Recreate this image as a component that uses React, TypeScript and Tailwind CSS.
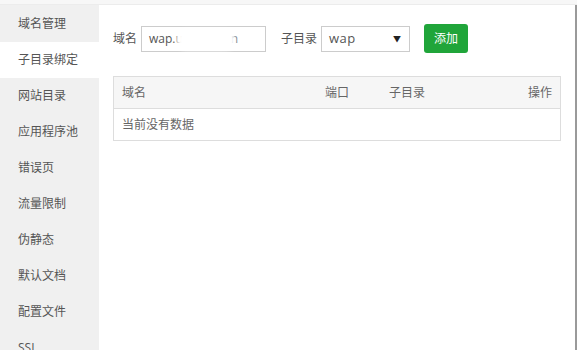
const menu = ['域名管理', '子目录绑定', '网站目录', '应用程序池', '错误页', '流量限制', '伪静态', '默认文档', '配置文件', 'SSL'];

export default function App() {
  return (
    <div
      className="h-[350px] w-[577px] overflow-hidden bg-white text-[12px] text-[#555]"
      style={{ fontFamily: '"Open Sans", "Noto Sans CJK SC", sans-serif' }}
    >
      <div className="h-[5px] border-b border-[#ececec] bg-[#f7f7f7]" />
      <div className="flex h-[345px] border-r-2 border-[#9a9a9a]">
        <div className="w-[99px] shrink-0 bg-[#f0f0f0] pt-px">
          {menu.map((m, i) => (
            <div
              key={m}
              className={`flex h-[36px] items-center pl-[18px] ${i === 1 ? 'bg-white' : ''}`}
            >
              {m}
            </div>
          ))}
        </div>
        <div className="flex-1 px-[14px] pt-[19px]">
          <div className="flex items-center">
            <span className="mr-[4px]">域名</span>
            <div className="relative flex h-[26px] w-[125px] items-center border border-[#ccc] pl-[7px] text-[#555]">
              <span>wap.u</span>
              <span className="ml-[48px]">n</span>
              <div className="absolute left-[34px] top-[3px] h-[20px] w-[60px] rounded-full bg-white blur-[2px]" />
            </div>
            <span className="ml-[15px] mr-[4px]">子目录</span>
            <div className="flex h-[26px] w-[89px] items-center justify-between border border-[#ccc] pl-[7px] pr-[8px] text-[13px] text-[#555]">
              <span className="tracking-[0.5px]">wap</span>
              <span className="text-[8px] text-[#222]">▼</span>
            </div>
            <button className="ml-[14px] h-[29px] w-[44px] rounded-[3px] bg-[#20a53a] text-[12px] text-white">
              添加
            </button>
          </div>
          <div className="mt-[23px] border border-[#ddd] text-[#666]">
            <div className="flex h-[32px] items-center border-b border-[#ddd] bg-[#f6f6f6] pl-[8px] pr-[8px]">
              <span className="w-[203px]">域名</span>
              <span className="w-[64px]">端口</span>
              <span className="flex-1">子目录</span>
              <span>操作</span>
            </div>
            <div className="flex h-[31px] items-center pl-[8px]">当前没有数据</div>
          </div>
        </div>
      </div>
    </div>
  );
}
